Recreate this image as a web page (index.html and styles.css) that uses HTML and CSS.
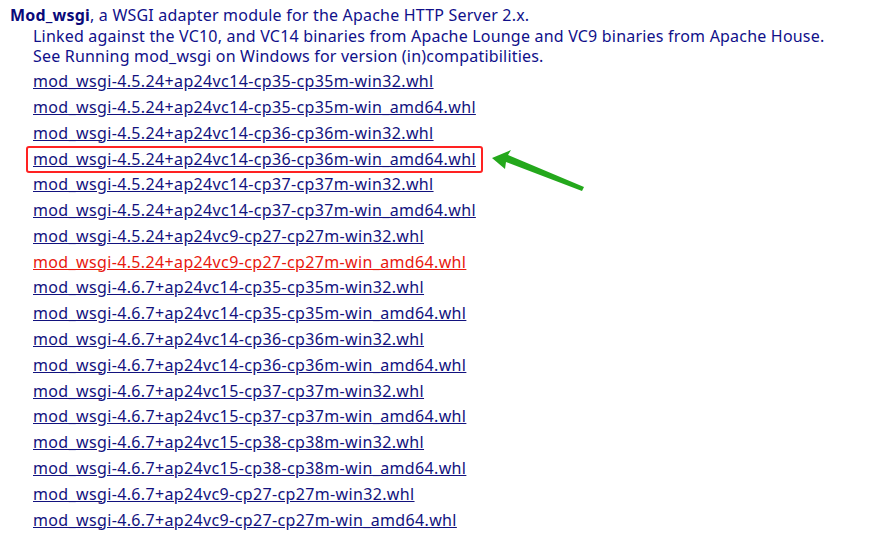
FILE: index.html
```html
<!DOCTYPE html>
<html>
<head>
<meta charset="utf-8">
<link rel="stylesheet" href="styles.css">
</head>
<body>
<div class="page">
  <p class="head"><strong>Mod_wsgi</strong>, a WSGI adapter module for the Apache HTTP Server 2.x.</p>
  <div class="indent">
    <p class="desc">Linked against the VC10, and VC14 binaries from <span class="ln">Apache Lounge</span> and VC9 binaries from <span class="ln">Apache House</span>.</p>
    <p class="desc">See <span class="ln">Running mod_wsgi on Windows</span> for version (in)compatibilities.</p>
    <ul class="files">
      <li><a href="#">mod_wsgi-4.5.24+ap24vc14-cp35-cp35m-win32.whl</a></li>
      <li><a href="#">mod_wsgi-4.5.24+ap24vc14-cp35-cp35m-win_amd64.whl</a></li>
      <li><a href="#">mod_wsgi-4.5.24+ap24vc14-cp36-cp36m-win32.whl</a></li>
      <li class="marked"><a href="#">mod_wsgi-4.5.24+ap24vc14-cp36-cp36m-win_amd64.whl</a>
        <svg class="arrow" width="100" height="44" viewBox="0 0 100 44"><polygon points="0,8 19,0 16,5 92,37 90,41 14,12 13,19" fill="#24a81c"/></svg>
      </li>
      <li><a href="#">mod_wsgi-4.5.24+ap24vc14-cp37-cp37m-win32.whl</a></li>
      <li><a href="#">mod_wsgi-4.5.24+ap24vc14-cp37-cp37m-win_amd64.whl</a></li>
      <li><a href="#">mod_wsgi-4.5.24+ap24vc9-cp27-cp27m-win32.whl</a></li>
      <li><a href="#" class="visited">mod_wsgi-4.5.24+ap24vc9-cp27-cp27m-win_amd64.whl</a></li>
      <li><a href="#">mod_wsgi-4.6.7+ap24vc14-cp35-cp35m-win32.whl</a></li>
      <li><a href="#">mod_wsgi-4.6.7+ap24vc14-cp35-cp35m-win_amd64.whl</a></li>
      <li><a href="#">mod_wsgi-4.6.7+ap24vc14-cp36-cp36m-win32.whl</a></li>
      <li><a href="#">mod_wsgi-4.6.7+ap24vc14-cp36-cp36m-win_amd64.whl</a></li>
      <li><a href="#">mod_wsgi-4.6.7+ap24vc15-cp37-cp37m-win32.whl</a></li>
      <li><a href="#">mod_wsgi-4.6.7+ap24vc15-cp37-cp37m-win_amd64.whl</a></li>
      <li><a href="#">mod_wsgi-4.6.7+ap24vc15-cp38-cp38m-win32.whl</a></li>
      <li><a href="#">mod_wsgi-4.6.7+ap24vc15-cp38-cp38m-win_amd64.whl</a></li>
      <li><a href="#">mod_wsgi-4.6.7+ap24vc9-cp27-cp27m-win32.whl</a></li>
      <li><a href="#">mod_wsgi-4.6.7+ap24vc9-cp27-cp27m-win_amd64.whl</a></li>
    </ul>
  </div>
</div>
</body>
</html>
```
FILE: styles.css
```css
html, body {
  margin: 0;
  padding: 0;
  background: #ffffff;
}
.page {
  padding: 5px 0 0 10px;
  font-family: "Noto Sans", "Open Sans", sans-serif;
  font-size: 16px;
  letter-spacing: 0.2px;
  color: #10108a;
}
p {
  margin: 0;
}
.head, .desc {
  line-height: 20.7px;
}
.head strong {
  font-weight: bold;
  color: #0a0a7a;
}
.indent {
  padding-left: 23px;
}
.ln {
  color: #10108a;
}
.files {
  list-style: none;
  margin: 2px 0 0 0;
  padding: 0;
}
.files li {
  line-height: 25.8px;
}
.files a {
  color: #12127e;
  text-decoration: underline;
  letter-spacing: 0.36px;
}
.files a.visited {
  color: #e8190f;
}
.marked {
  position: relative;
}
.marked::after {
  content: "";
  position: absolute;
  left: -7px;
  top: -1px;
  width: 453px;
  height: 23px;
  border: 2.5px solid #ff2222;
  border-radius: 3px;
}
.arrow {
  position: absolute;
  left: 459px;
  top: 3px;
}
```
